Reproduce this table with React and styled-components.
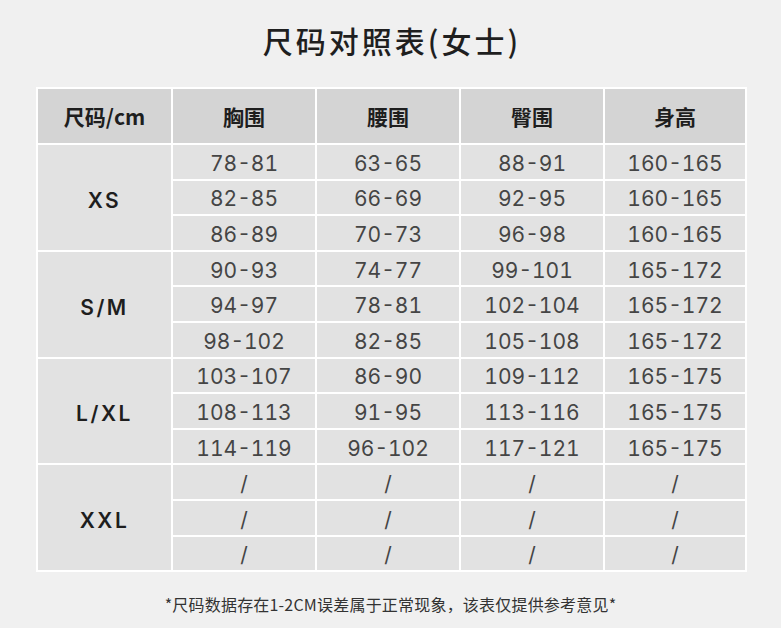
import React from "react";
import styled, { createGlobalStyle } from "styled-components";

const Global = createGlobalStyle`
  html, body { margin: 0; padding: 0; background: #f0f0f0; }
  body { font-family: Inter, "Noto Sans CJK SC", sans-serif; }
`;

const Page = styled.div`
  width: 781px;
  height: 628px;
  display: flex;
  flex-direction: column;
  align-items: center;
  background: #f0f0f0;
  box-sizing: border-box;
  padding-top: 20px;
`;

const Title = styled.h1`
  margin: 0;
  font-family: "Noto Sans CJK SC", sans-serif;
  font-size: 30px;
  line-height: 40px;
  font-weight: 500;
  letter-spacing: 3px;
  color: #1f1f1f;
  margin-left: 3px;
`;

const Table = styled.div`
  margin-top: 27px;
  margin-left: 2px;
  display: grid;
  grid-template-columns: 133px repeat(3, 142px) 140px;
  grid-template-rows: 54px repeat(12, 33.6px);
  gap: 2px;
  padding: 2px;
  background: #ffffff;
`;

const Cell = styled.div`
  display: flex;
  align-items: center;
  justify-content: center;
  box-sizing: border-box;
  padding-top: ${(p) => (p.$head ? "0" : p.$size ? "6px" : "3px")};
  background: ${(p) => (p.$head ? "#d4d4d4" : "#e2e2e2")};
  color: ${(p) => (p.$strong ? "#1e1e1e" : "#454545")};
  font-family: ${(p) =>
    p.$head ? `"Noto Sans CJK SC", sans-serif` : `Inter, "Noto Sans CJK SC", sans-serif`};
  font-size: 21px;
  font-weight: ${(p) => (p.$head ? 700 : p.$size ? 600 : 400)};
  font-variant-numeric: ${(p) => (p.$size ? "normal" : "tabular-nums")};
  letter-spacing: ${(p) => (p.$size ? "2.5px" : "0")};
  grid-row: ${(p) => (p.$span ? `span ${p.$span}` : "auto")};
  line-height: 1;
`;

const Note = styled.p`
  margin: 20px 0 0;
  font-family: "Noto Sans CJK SC", sans-serif;
  font-size: 16px;
  line-height: 24px;
  color: #333;
  letter-spacing: 0.2px;
`;

const headers = ["尺码/cm", "胸围", "腰围", "臀围", "身高"];

const groups = [
  {
    size: "XS",
    rows: [
      ["78-81", "63-65", "88-91", "160-165"],
      ["82-85", "66-69", "92-95", "160-165"],
      ["86-89", "70-73", "96-98", "160-165"],
    ],
  },
  {
    size: "S/M",
    rows: [
      ["90-93", "74-77", "99-101", "165-172"],
      ["94-97", "78-81", "102-104", "165-172"],
      ["98-102", "82-85", "105-108", "165-172"],
    ],
  },
  {
    size: "L/XL",
    rows: [
      ["103-107", "86-90", "109-112", "165-175"],
      ["108-113", "91-95", "113-116", "165-175"],
      ["114-119", "96-102", "117-121", "165-175"],
    ],
  },
  {
    size: "XXL",
    rows: [
      ["/", "/", "/", "/"],
      ["/", "/", "/", "/"],
      ["/", "/", "/", "/"],
    ],
  },
];

export default function App() {
  return (
    <>
      <Global />
      <Page>
        <Title>尺码对照表(女士)</Title>
        <Table>
          {headers.map((h) => (
            <Cell key={h} $head $strong>
              {h}
            </Cell>
          ))}
          {groups.map((g) => (
            <React.Fragment key={g.size}>
              <Cell $strong $size $span={3}>
                {g.size}
              </Cell>
              {g.rows.map((r, ri) =>
                r.map((v, ci) => <Cell key={`${g.size}-${ri}-${ci}`}>{v}</Cell>)
              )}
            </React.Fragment>
          ))}
        </Table>
        <Note>*尺码数据存在1-2CM误差属于正常现象，该表仅提供参考意见*</Note>
      </Page>
    </>
  );
}
